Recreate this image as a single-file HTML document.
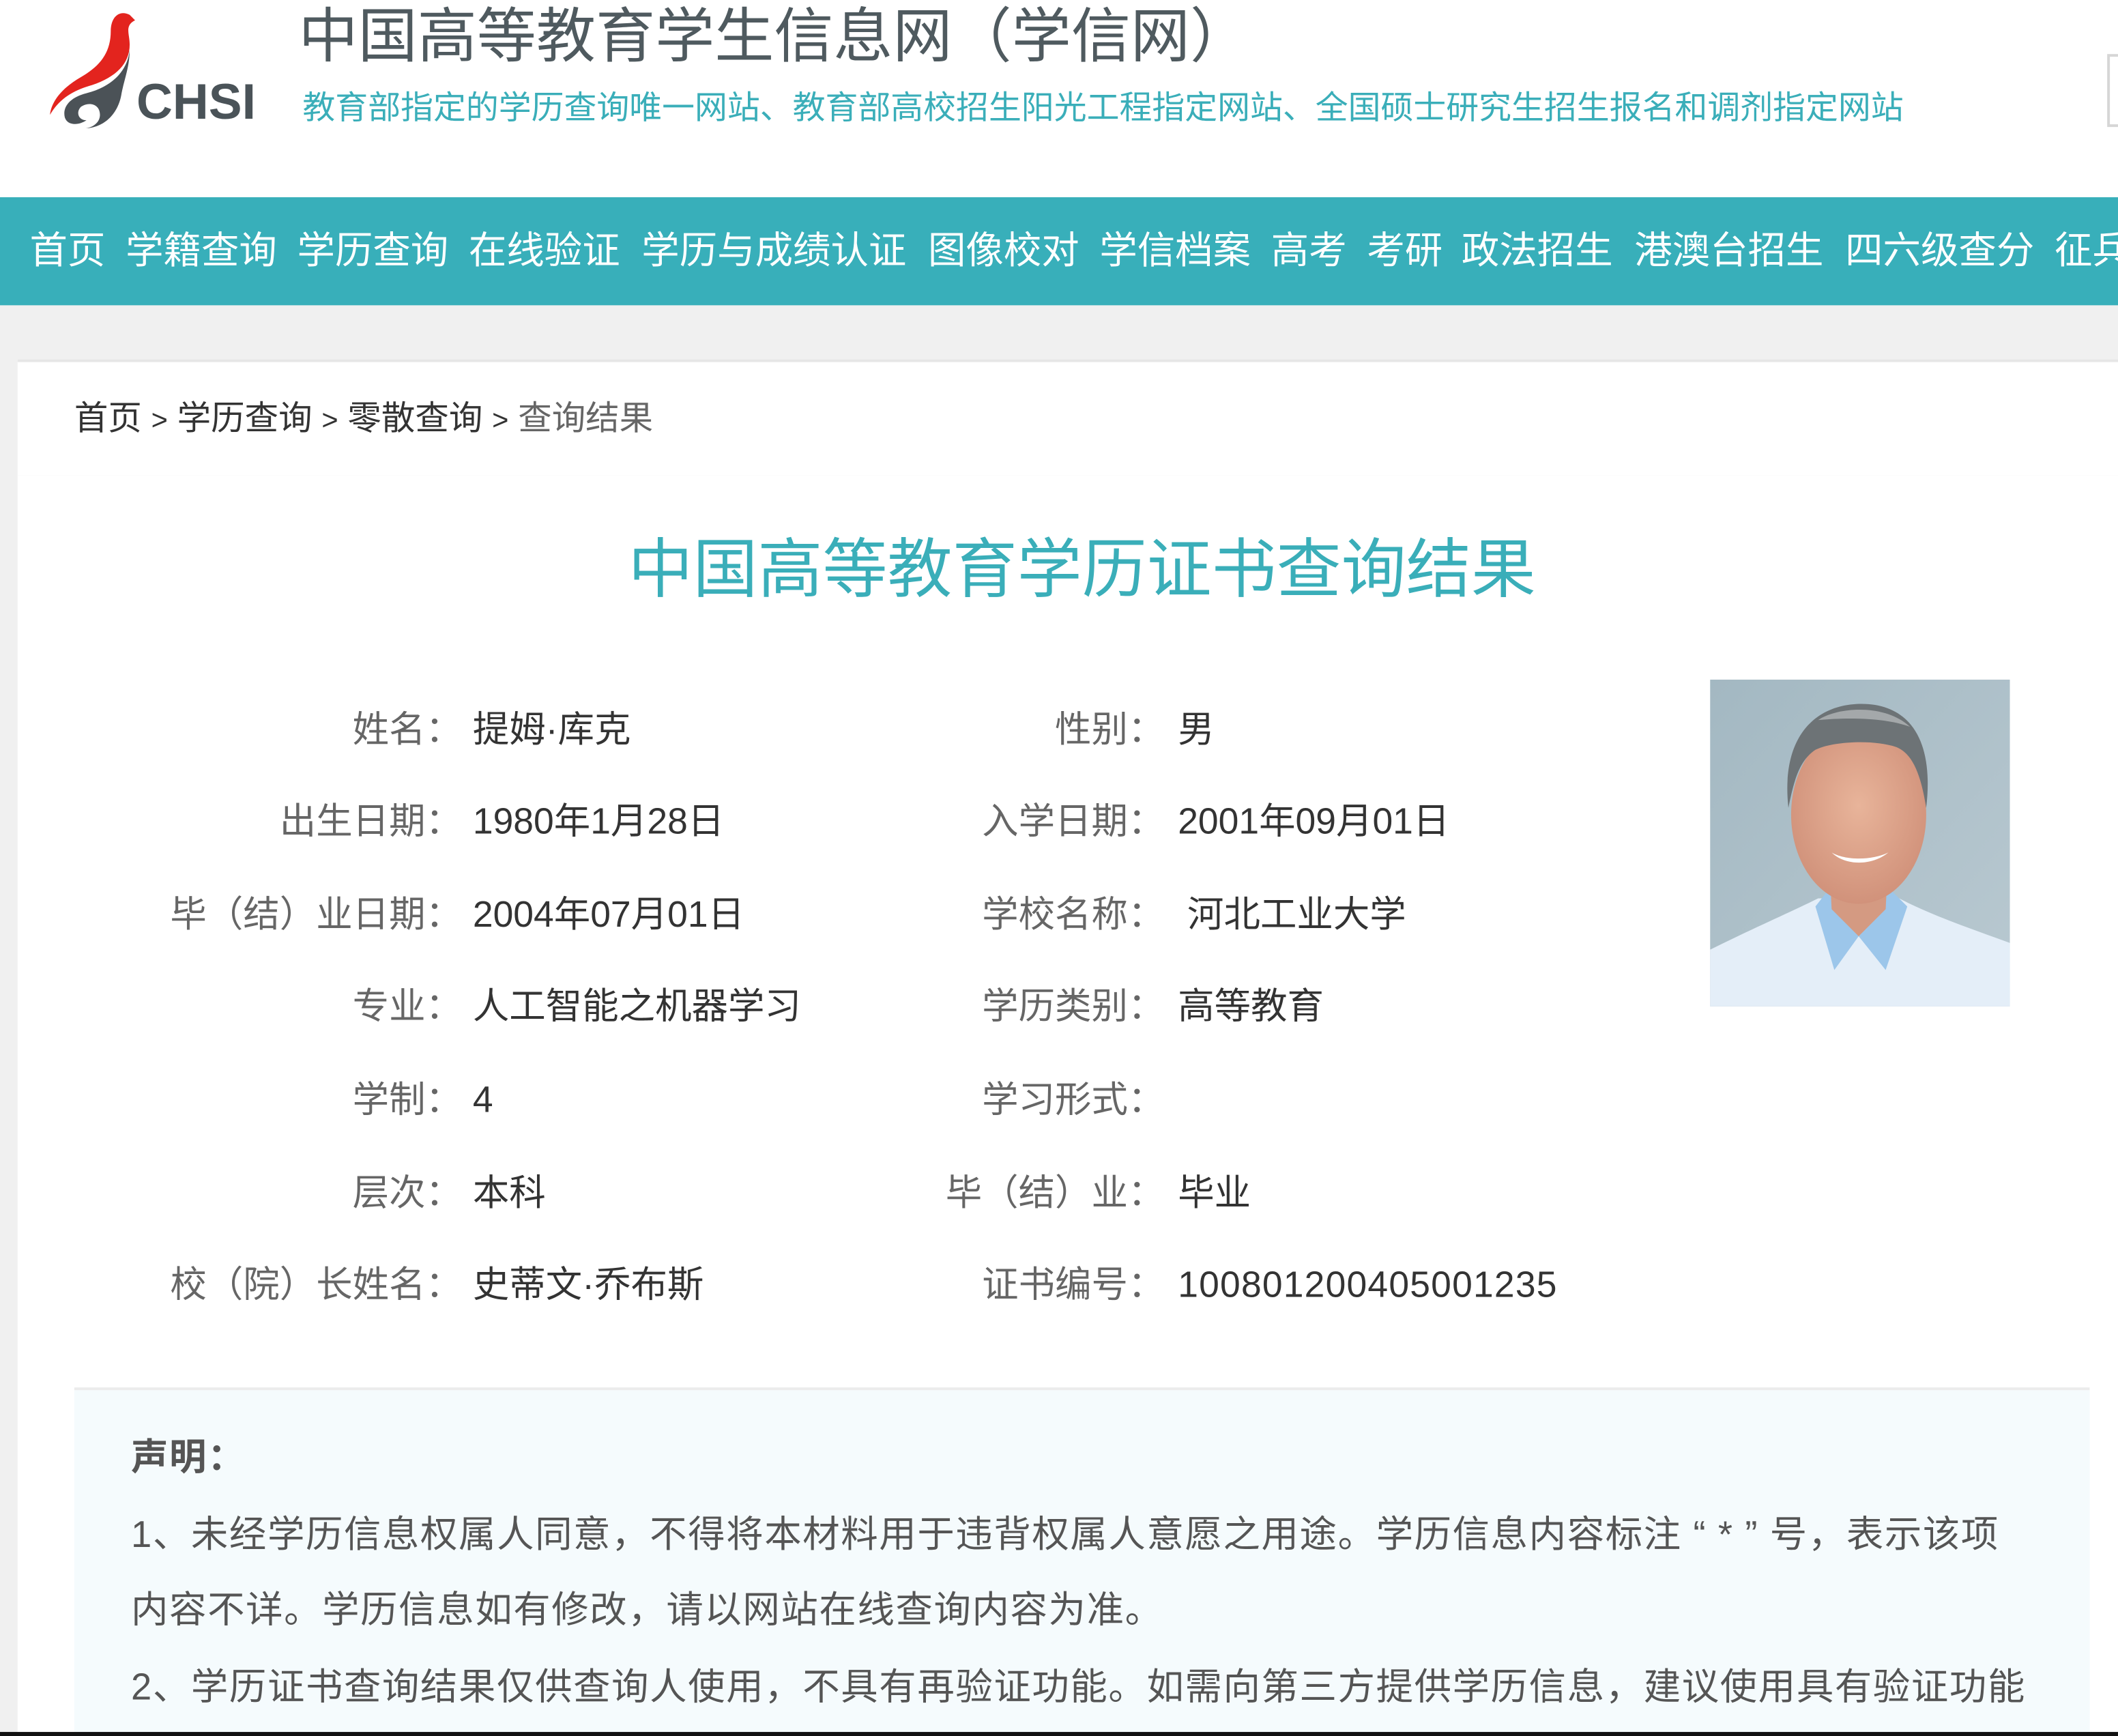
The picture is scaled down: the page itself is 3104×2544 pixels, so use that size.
<!DOCTYPE html>
<html><head><meta charset="utf-8">
<style>
html,body{margin:0;padding:0;width:3104px;height:2544px;overflow:hidden;background:#fff;}
#w{position:absolute;left:0;top:0;width:1568px;height:1285px;transform:scale(1.97959,1.97977);transform-origin:0 0;font-family:"Liberation Sans","Noto Sans CJK SC",sans-serif;background:#fff;overflow:hidden;}
.a{position:absolute;white-space:nowrap;}
.nav{position:absolute;left:0;top:146px;width:1568px;height:80px;background:#38afba;overflow:hidden;}
.nav span{position:absolute;top:20px;color:#fff;font-size:28px;line-height:40px;white-space:nowrap;}
.lab{position:absolute;color:#666;font-size:27px;line-height:36px;text-align:right;white-space:nowrap;}
.val{position:absolute;color:#333;font-size:27px;line-height:36px;white-space:nowrap;}
.decl{position:absolute;left:97px;color:#555;font-size:27.5px;line-height:36px;white-space:nowrap;letter-spacing:0.8px;}
</style></head><body>
<div id="w">
<svg class="a" style="left:30px;top:5px" width="80" height="92" viewBox="0 0 80 92">
<path d="M66 6 C58 2 52 8 52 18 C52 34 44 44 30 52 C16 60 8 70 7 80 C14 68 24 62 38 58 C56 52 66 42 66 28 C66 20 62 14 70 10 Z" fill="#e3241e"/>
<path d="M66 32 C64 50 50 60 34 64 C22 67 16 74 18 82 C20 88 28 88 34 84 C28 84 26 78 30 74 C36 70 44 72 44 80 C44 86 38 90 32 90 C48 90 58 78 60 64 C62 54 66 44 66 32 Z" fill="#4b5257"/>
</svg>
<div class="a" style="left:101px;top:54px;font-size:37px;font-weight:bold;color:#4a5358;line-height:44px;letter-spacing:0px">CHSI</div>
<div class="a" style="left:221px;top:1px;font-size:44px;color:#4f5a5f;line-height:54px;">中国高等教育学生信息网（学信网）</div>
<div class="a" style="left:224px;top:65px;font-size:24.2px;color:#3aaeb9;line-height:32px;">教育部指定的学历查询唯一网站、教育部高校招生阳光工程指定网站、全国硕士研究生招生报名和调剂指定网站</div>
<div class="a" style="left:1560px;top:40px;width:20px;height:54px;border:2px solid #d6d6d6;box-sizing:border-box;"></div>
<div class="nav">
<span style="left:22px">首页</span>
<span style="left:93px">学籍查询</span>
<span style="left:220px">学历查询</span>
<span style="left:347px">在线验证</span>
<span style="left:475px">学历与成绩认证</span>
<span style="left:687px">图像校对</span>
<span style="left:814px">学信档案</span>
<span style="left:941px">高考</span>
<span style="left:1012px">考研</span>
<span style="left:1082px">政法招生</span>
<span style="left:1210px">港澳台招生</span>
<span style="left:1366px">四六级查分</span>
<span style="left:1521px">征兵</span>
</div>
<div class="a" style="left:0;top:226px;width:1568px;height:1059px;background:#f0f0f0;"></div>
<div class="a" style="left:13px;top:266px;width:1560px;height:84px;background:#fff;border-top:2px solid #e6e6e6;border-bottom:2px solid #e6e6e6;"></div>
<div class="a" style="left:55px;top:293px;font-size:25px;line-height:34px;color:#333;">首页 <span style="font-size:21px">&gt;</span> 学历查询 <span style="font-size:21px">&gt;</span> 零散查询 <span style="font-size:21px">&gt;</span> <span style="color:#666">查询结果</span></div>
<div class="a" style="left:13px;top:352px;width:1560px;height:940px;background:#fff;"></div>
<div class="a" style="left:0;top:392px;width:1602px;text-align:center;font-size:48px;line-height:62px;color:#3aaeb9;">中国高等教育学历证书查询结果</div>
<div class="lab" style="right:1226px;top:522px">姓名：</div><div class="val" style="left:350px;top:522px">提姆·库克</div>
<div class="lab" style="right:706px;top:522px">性别：</div><div class="val" style="left:872px;top:522px">男</div>
<div class="lab" style="right:1226px;top:590px">出生日期：</div><div class="val" style="left:350px;top:590px">1980年1月28日</div>
<div class="lab" style="right:706px;top:590px">入学日期：</div><div class="val" style="left:872px;top:590px">2001年09月01日</div>
<div class="lab" style="right:1226px;top:659px">毕（结）业日期：</div><div class="val" style="left:350px;top:659px">2004年07月01日</div>
<div class="lab" style="right:706px;top:659px">学校名称：</div><div class="val" style="left:879px;top:659px">河北工业大学</div>
<div class="lab" style="right:1226px;top:727px">专业：</div><div class="val" style="left:350px;top:727px">人工智能之机器学习</div>
<div class="lab" style="right:706px;top:727px">学历类别：</div><div class="val" style="left:872px;top:727px">高等教育</div>
<div class="lab" style="right:1226px;top:796px">学制：</div><div class="val" style="left:350px;top:796px">4</div>
<div class="lab" style="right:706px;top:796px">学习形式：</div>
<div class="lab" style="right:1226px;top:865px">层次：</div><div class="val" style="left:350px;top:865px">本科</div>
<div class="lab" style="right:706px;top:865px">毕（结）业：</div><div class="val" style="left:872px;top:865px">毕业</div>
<div class="lab" style="right:1226px;top:933px">校（院）长姓名：</div><div class="val" style="left:350px;top:933px">史蒂文·乔布斯</div>
<div class="lab" style="right:706px;top:933px">证书编号：</div><div class="val" style="left:872px;top:933px;letter-spacing:0.6px">100801200405001235</div>
<svg class="a" style="left:1266px;top:503px" width="222" height="242" viewBox="0 0 222 242">
<defs><linearGradient id="bg" x1="0" y1="0" x2="1" y2="1"><stop offset="0" stop-color="#a3b8c2"/><stop offset="1" stop-color="#b9c9d1"/></linearGradient>
<radialGradient id="sk" cx="0.5" cy="0.45" r="0.6"><stop offset="0" stop-color="#e8b49a"/><stop offset="1" stop-color="#cf8f78"/></radialGradient></defs>
<rect width="222" height="242" fill="url(#bg)"/>
<path d="M0 200 C30 185 60 172 80 162 L140 162 C165 175 195 185 222 195 L222 242 L0 242 Z" fill="#e4eef8"/>
<path d="M78 168 L92 150 L110 190 L128 150 L146 168 L130 215 L110 190 L92 215 Z" fill="#9cc6ea"/>
<path d="M88 130 L90 170 L110 190 L130 170 L132 130 Z" fill="#d49a82"/>
<ellipse cx="110" cy="100" rx="50" ry="66" fill="url(#sk)"/>
<path d="M58 95 C52 40 80 18 112 18 C148 18 166 45 160 95 C156 70 150 55 138 50 C120 44 90 46 78 52 C66 60 62 75 58 95 Z" fill="#6d7376"/>
<path d="M80 30 C95 20 130 18 148 35 C130 28 100 28 80 30 Z" fill="#a4a8aa"/>
<path d="M90 128 C100 138 120 138 132 128 C120 134 100 134 90 128 Z" fill="#fff"/>
</svg>
<div class="a" style="left:55px;top:1027px;width:1492px;height:270px;background:#f5fbfd;border-top:2px solid #ececec;"></div>
<div class="decl" style="top:1061px;font-weight:bold;">声明：</div>
<div class="decl" style="top:1118px;">1、未经学历信息权属人同意，不得将本材料用于违背权属人意愿之用途。学历信息内容标注 “ * ” 号，表示该项</div>
<div class="decl" style="top:1174px;">内容不详。学历信息如有修改，请以网站在线查询内容为准。</div>
<div class="decl" style="top:1231px;">2、学历证书查询结果仅供查询人使用，不具有再验证功能。如需向第三方提供学历信息，建议使用具有验证功能</div>
<div class="a" style="left:0;top:1282px;width:1568px;height:4px;background:#111;"></div>
</div>
</body></html>
